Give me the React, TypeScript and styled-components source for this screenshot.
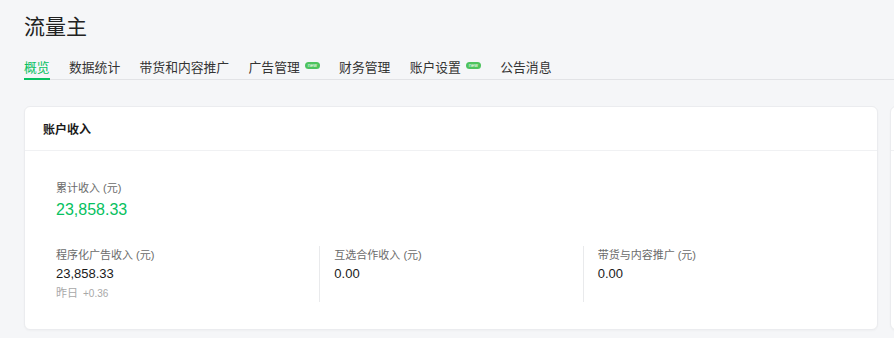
import styled, { createGlobalStyle } from 'styled-components';

const GlobalStyle = createGlobalStyle`
  html, body {
    margin: 0;
    padding: 0;
    background: #f5f6f8;
    overflow: hidden;
  }
  body {
    font-family: "Liberation Sans", "Noto Sans CJK SC", sans-serif;
    color: #333;
  }
`;

const tabs = [
  { name: '概览', active: true },
  { name: '数据统计' },
  { name: '带货和内容推广' },
  { name: '广告管理', isNew: true },
  { name: '财务管理' },
  { name: '账户设置', isNew: true },
  { name: '公告消息' },
];

const incomes = [
  { label: '程序化广告收入 (元)', value: '23,858.33', yesterday: '+0.36' },
  { label: '互选合作收入 (元)', value: '0.00' },
  { label: '带货与内容推广 (元)', value: '0.00' },
];

export default function App() {
  return (
    <>
      <GlobalStyle />
      <Page>
        <Header>
          <Title>流量主</Title>
        </Header>
        <Nav>
          {tabs.map((t) => (
            <Tab key={t.name} $active={!!t.active}>
              {t.name}
              {t.isNew && <NewBadge>new</NewBadge>}
            </Tab>
          ))}
        </Nav>
        <Cards>
          <Card>
            <CardHeader>账户收入</CardHeader>
            <CardBody>
              <Label>累计收入 (元)</Label>
              <Total>23,858.33</Total>
              <Columns>
                {incomes.map((item) => (
                  <Column key={item.label}>
                    <Label>{item.label}</Label>
                    <Value>{item.value}</Value>
                    {item.yesterday && (
                      <Yesterday>
                        昨日<Delta>{item.yesterday}</Delta>
                      </Yesterday>
                    )}
                  </Column>
                ))}
              </Columns>
            </CardBody>
          </Card>
          <Card>
            <CardHeader>&nbsp;</CardHeader>
            <CardBody />
          </Card>
        </Cards>
      </Page>
    </>
  );
}

const Page = styled.div`
  min-height: 338px;
  overflow: hidden;
`;

const Header = styled.div`
  padding: 12px 24px 0;
`;

const Title = styled.h1`
  margin: 0;
  font-size: 21px;
  line-height: 30px;
  font-weight: 400;
  color: #222;
`;

const Nav = styled.div`
  display: flex;
  gap: 19.4px;
  margin: 15px 0 0 24px;
  border-bottom: 1px solid #e2e3e6;
`;

const Tab = styled.div<{ $active: boolean }>`
  display: inline-flex;
  align-items: center;
  font-size: 12.8px;
  line-height: 20px;
  padding-top: 1px;
  margin-bottom: -1px;
  border-bottom: 2px solid ${(p) => (p.$active ? '#07c160' : 'transparent')};
  color: ${(p) => (p.$active ? '#07c160' : '#333')};
  white-space: nowrap;
`;

const NewBadge = styled.span`
  display: inline-flex;
  align-items: center;
  justify-content: center;
  width: 15px;
  height: 7px;
  margin-left: 5px;
  border-radius: 4px;
  background: #4dc35e;
  color: #fff;
  font-size: 5px;
  line-height: 7px;
  transform: translateY(-3px);
`;

const Cards = styled.div`
  display: flex;
  gap: 12px;
  padding: 26px 0 0 24px;
`;

const Card = styled.div`
  flex: 0 0 854px;
  box-sizing: border-box;
  background: #fff;
  border: 1px solid #ebecef;
  border-radius: 6px;
  box-shadow: 0 1px 2px rgba(0, 0, 0, 0.03);
`;

const CardHeader = styled.div`
  height: 43px;
  display: flex;
  align-items: center;
  padding-left: 18px;
  border-bottom: 1px solid #f0f1f3;
  font-size: 12px;
  font-weight: 700;
  color: #1a1a1a;
`;

const CardBody = styled.div`
  padding: 29px 31px 27px;
`;

const Label = styled.div`
  font-size: 11px;
  line-height: 16px;
  color: #6b6b6b;
`;

const Total = styled.div`
  margin-top: 3px;
  font-size: 16px;
  line-height: 22px;
  color: #07c160;
`;

const Columns = styled.div`
  display: grid;
  grid-template-columns: repeat(3, 1fr);
  margin-top: 25px;
`;

const Column = styled.div`
  min-height: 55px;
  padding-top: 1px;
  & + & {
    border-left: 1px solid #e9eaec;
    padding-left: 14px;
  }
`;

const Value = styled.div`
  margin-top: 2px;
  font-size: 13px;
  line-height: 18px;
  color: #1a1a1a;
`;

const Yesterday = styled.div`
  margin-top: 2px;
  font-size: 11px;
  line-height: 16px;
  color: #a8a8a8;
`;

const Delta = styled.span`
  margin-left: 5px;
  font-size: 10px;
`;
